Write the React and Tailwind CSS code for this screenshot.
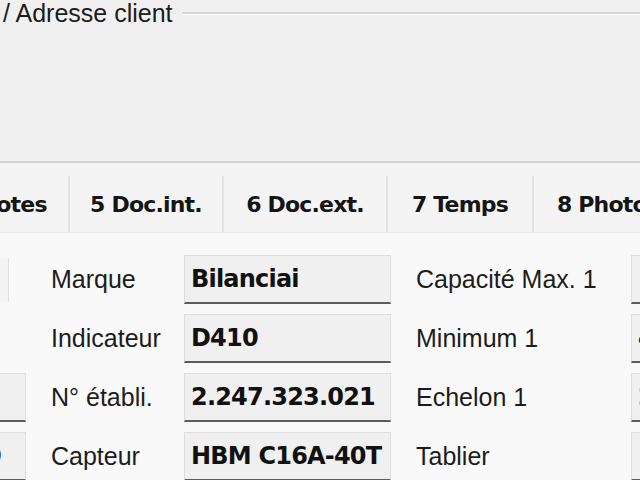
import React from 'react'

const labelFont = { fontFamily: '"Liberation Sans", Arial, sans-serif' }

const rows = [
  { left: null, leftKind: 'faint', label: 'Marque', value: 'Bilanciai', right: 'Capacité Max. 1', rightVal: '' },
  { left: null, leftKind: 'none', label: 'Indicateur', value: 'D410', right: 'Minimum 1', rightVal: '4' },
  { left: '', leftKind: 'box', label: 'N° établi.', value: '2.247.323.021', right: 'Echelon 1', rightVal: '2' },
  { left: '0', leftKind: 'box', label: 'Capteur', value: 'HBM C16A-40T', right: 'Tablier', rightVal: '1' },
]

const tabs = [
  { text: '4 Notes', w: 'w-[134px]' },
  { text: '5 Doc.int.', w: 'w-[154px]' },
  { text: '6 Doc.ext.', w: 'w-[164px]' },
  { text: '7 Temps', w: 'w-[146px]' },
  { text: '8 Photos', w: 'w-[150px]' },
]

function Field({ children, className = '' }) {
  return (
    <div
      className={`h-[49px] shrink-0 bg-[#f0f0f0] border border-[#dedede] border-b-2 border-b-[#5c5c5c] flex items-center px-[6px] overflow-hidden whitespace-nowrap font-[DejaVu_Sans] font-bold text-[24px] tracking-[-0.8px] text-[#111] ${className}`}
    >
      {children}
    </div>
  )
}

export default function App() {
  return (
    <div className="w-[640px] h-[480px] overflow-hidden bg-[#f9f9f9] text-[#1c1c1c]" style={labelFont}>
      {/* group box: adresse client */}
      <div className="h-[163px] bg-[#f0f0f0] border-b-2 border-[#d2d2d2] flex items-start">
        <span className="text-[25px] leading-[26px] pl-[3px] pr-[9px] whitespace-nowrap">/ Adresse client</span>
        <div className="flex-1 mt-[12px] border-t-2 border-[#d6d6d6] border-b border-b-white" />
      </div>

      {/* tabs */}
      <div className="bg-[#f3f3f3] pt-[13px]">
        <div className="flex -ml-[64px] h-[57px] border-b border-[#e6e6e6]">
          {tabs.map((t) => (
            <div
              key={t.text}
              className={`${t.w} shrink-0 flex items-center justify-center border-r-2 border-[#e4e4e4] bg-[#f4f4f4] font-[DejaVu_Sans] font-bold text-[22px] tracking-[-0.8px] text-[#151515] whitespace-nowrap`}
            >
              {t.text}
            </div>
          ))}
        </div>
      </div>

      {/* fields */}
      <div className="pt-[22px] flex flex-col gap-[10px]">
        {rows.map((r) => (
          <div key={r.label} className="flex items-center h-[49px]">
            <div className="w-[26px] shrink-0 flex justify-start">
              {r.leftKind === 'box' && (
                <Field className="w-[60px] -ml-[34px] justify-end px-[0px]">
                  <span className="pr-[18px]">{r.left}</span>
                </Field>
              )}
              {r.leftKind === 'faint' && (
                <div className="w-[9px] h-[44px] border-r border-[#e0e0e0] bg-[#f4f4f4]" />
              )}
            </div>
            <div className="w-[158px] shrink-0 pl-[25px] text-[25px] whitespace-nowrap">{r.label}</div>
            <Field className="w-[207px]">{r.value}</Field>
            <div className="w-[240px] shrink-0 pl-[25px] text-[25px] whitespace-nowrap">{r.right}</div>
            <Field className="flex-1 px-[2px]">{r.rightVal}</Field>
          </div>
        ))}
      </div>
    </div>
  )
}
